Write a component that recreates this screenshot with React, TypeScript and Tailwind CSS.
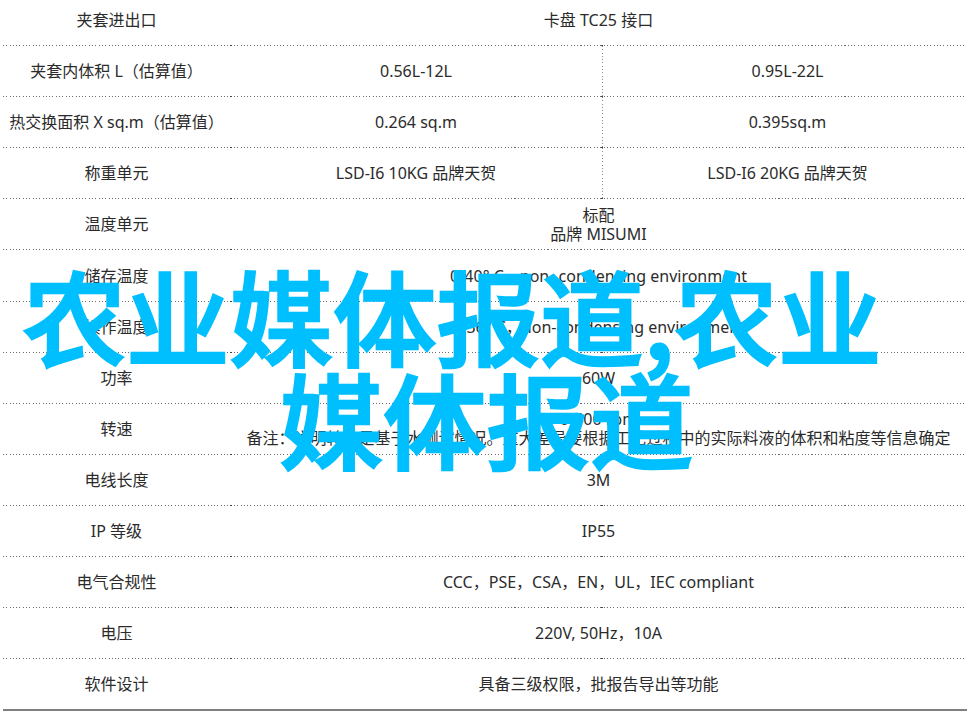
const line = "bg-[repeating-linear-gradient(90deg,#6b6b6b_0,#6b6b6b_1px,transparent_1px,transparent_3.3px)] bg-[length:100%_1px] bg-bottom bg-no-repeat";

type Row = { label: string; a: string; b?: string };

const L = "\uFF08";
const R = "\uFF09";
const C = "\uFF0C";

const rows: Row[] = [
  { label: "夹套进出口", a: "卡盘 TC25 接口" },
  { label: `夹套内体积 L${L}估算值${R}`, a: "0.56L-12L", b: "0.95L-22L" },
  { label: `热交换面积 X sq.m${L}估算值${R}`, a: "0.264 sq.m", b: "0.395sq.m" },
  { label: "称重单元", a: "LSD-I6 10KG 品牌天贺", b: "LSD-I6 20KG 品牌天贺" },
  { label: "温度单元", a: "标配\n品牌 MISUMI" },
  { label: "储存温度", a: `0-40° C${C}non- condensing environment` },
  { label: "操作温度", a: `5-36° C${C}non-condensing environment` },
  { label: "功率", a: "60W" },
  { label: "转速", a: "0-400 rpm\n备注\uFF1A说明转速是基于水测试情况。重大差异要根据工艺过程中的实际料液的体积和粘度等信息确定" },
  { label: "电线长度", a: "3M" },
  { label: "IP 等级", a: "IP55" },
  { label: "电气合规性", a: `CCC${C}PSE${C}CSA${C}EN${C}UL${C}IEC compliant` },
  { label: "电压", a: `220V, 50Hz${C}10A` },
  { label: "软件设计", a: `具备三级权限${C}批报告导出等功能` },
];

export default function App() {
  return (
    <div className="relative h-[716px] w-[971px] overflow-hidden bg-white font-['Noto_Sans','Noto_Sans_CJK_SC',sans-serif] text-[16px] leading-[19px] text-[#2b2b2b]">
      <div className="-mt-[5px] ml-[3px] w-[964px]">
        {rows.map((r, i) => (
          <div
            key={r.label}
            className={`relative grid h-[51.1px] grid-cols-[227px_372px_365px] items-center text-center ${i === rows.length - 1 ? "h-[52px] border-b-2 border-[#808080]" : line}`}
          >
            <div>{r.label}</div>
            {r.b ? (
              <>
                <div>{r.a}</div>
                <div className="flex h-full items-center justify-center bg-[repeating-linear-gradient(180deg,#8a8a8a_0,#8a8a8a_1px,transparent_1px,transparent_3.3px)] bg-[length:1px_100%] bg-left bg-no-repeat pl-[6px]">
                  {r.b}
                </div>
              </>
            ) : (
              <div className="col-span-2 whitespace-pre-line">{r.a}</div>
            )}
            {i < rows.length - 1 && (
              <>
                <span className="absolute bottom-0 left-[227px] h-px w-[2px] bg-[#444]" />
                <span className="absolute bottom-0 left-[598px] h-px w-[2px] bg-[#444]" />
              </>
            )}
          </div>
        ))}
      </div>
      <div className="absolute left-0 top-[263px] w-[971px] text-center font-['Noto_Sans_CJK_SC',sans-serif] text-[103.5px] font-medium leading-[103px] text-[#00bfff] [-webkit-text-stroke:2.5px_#00bfff]">
        <div className="pr-[67px]">农业媒体报道,农业</div>
        <div className="pl-[2px]">媒体报道</div>
      </div>
    </div>
  );
}
